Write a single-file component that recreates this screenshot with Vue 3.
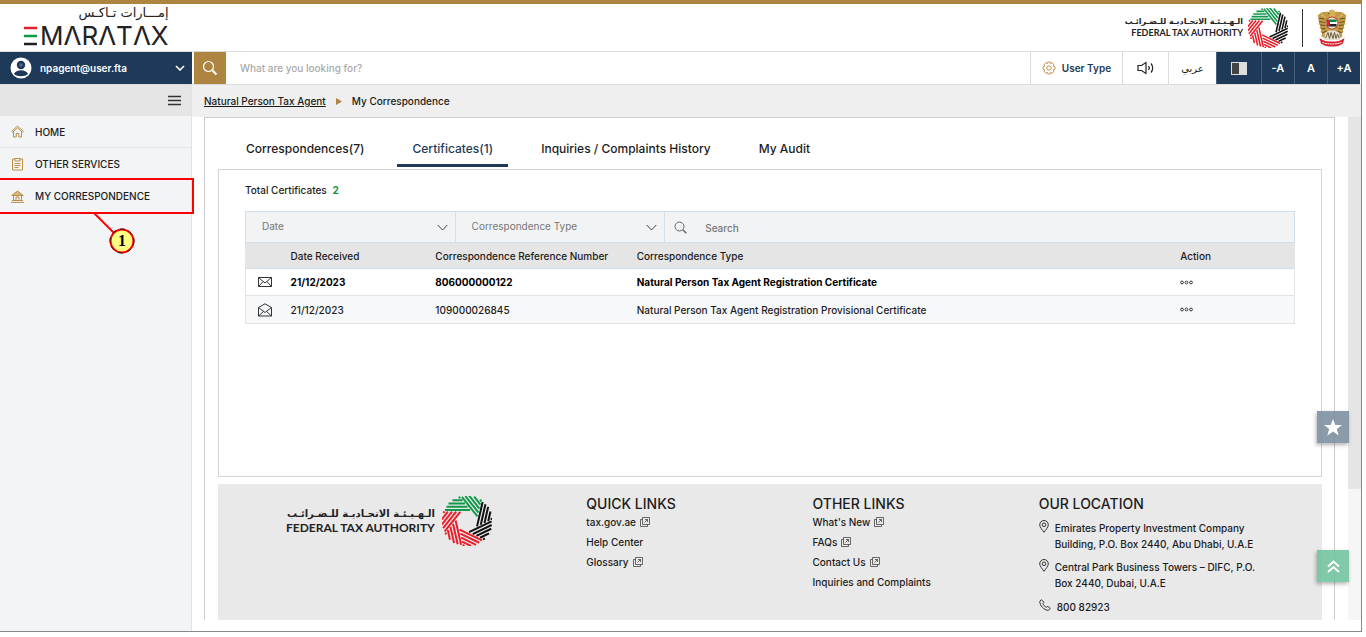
<template>
  <div class="page">
    <div class="frame">
      <header class="brand-bar">
        <a href="#" class="emaratax">
          <span class="emaratax-ar" lang="ar" dir="rtl">إمـــارات تـاكـس</span>
          <span class="emaratax-en">
            <svg width="14" height="20" viewBox="0 0 14 20">
              <path d="M0 2h13" stroke="#e0202b" stroke-width="2.500" />
              <path d="M0 10h13" stroke="#0f9a48" stroke-width="2.500" />
              <path d="M0 18h13" stroke="#222" stroke-width="2.500" />
            </svg>
            <span>MΛRΛTΛX</span>
          </span>
        </a>
        <div class="brand-right">
          <div class="fta">
            <div class="fta-text">
              <span class="fta-ar" lang="ar" dir="rtl">الـهـيـئـة الاتحـاديـة للـضـرائـب</span>
              <span class="fta-en">FEDERAL TAX AUTHORITY</span>
            </div>
            <svg class="knot" viewBox="-50 -50 100 100">
              <g v-for="(color, i) in knotColors" :key="i" :stroke="color" :transform="`rotate(${i * 51.43})`">
                <path :d="knotPath" />
              </g>
            </svg>
          </div>
          <span class="divider"></span>
          <svg class="emblem" viewBox="0 0 60 76">
            <path d="M24 6C16 4 5 6 1 14l3 3-2 4 3 4-2 5 4 3-2 5 4 3-2 5 4 3-2 5 5 4h32l5-4-2-5 4-3-2-5 4-3-2-5 4-3-2-5 3-4-2-4 3-3C55 6 44 4 36 6z" fill="#c39a47" />
            <path d="M21 9l4-6c4-4 12-2 12 5l-1 9H24l2-7z" fill="#d6b15a" />
            <path d="M21 9l4-2v3z" fill="#5a4017" />
            <path d="M3 18l12 2M4 25l11 2M6 32l10 1M8 40l9-1M10 48l9-4M57 18l-12 2M56 25l-11 2M54 32l-10 1M52 40l-9-1M50 48l-9-4" stroke="#6b4d1d" stroke-width="2" fill="none" />
            <path d="M8 11l9 6M52 11l-9 6" stroke="#e2c47c" stroke-width="2" />
            <path d="M16 48l8-5h12l8 5 2 14H14z" fill="#e6dfcf" />
            <path d="M17 58l5-11 3 12 3-12 4 12 3-12 3 12 3-9 3 8" stroke="#6d5b3c" stroke-width="2" fill="none" />
            <circle cx="30" cy="28" r="13" fill="#b7423a" />
            <circle cx="30" cy="28" r="11" fill="#f0e6cf" />
            <path d="M21 21h18v5H21z" fill="#108548" />
            <path d="M21 26h19v4H21z" fill="#fff" />
            <path d="M21 30h18v5H21z" fill="#222" />
            <path d="M20 22h6v12h-6z" fill="#d8222c" />
            <path d="M5 58c7 6 15 7 25 7s18-1 25-7l-3 11c-6 5-14 6-22 6s-16-1-22-6z" fill="#d8222c" />
            <path d="M11 67c9 4 29 4 38 0" stroke="#fff" stroke-width="2" stroke-dasharray="4 1" fill="none" />
          </svg>
        </div>
      </header>

      <div class="toolbar">
        <button class="user">
          <svg width="22" height="22" viewBox="0 0 22 22">
            <circle cx="11" cy="11" r="10.5" fill="#fff" />
            <circle cx="11" cy="8" r="4.2" fill="#1e3a58" />
            <path d="M4 17c2-5 12-5 14 0-3 3-11 3-14 0z" fill="#1e3a58" />
            <circle cx="11" cy="8" r="1.8" fill="#fff" opacity=".25" />
          </svg>
          <span>npagent@user.fta</span>
          <svg class="chev" width="10" height="6" viewBox="0 0 10 6"><path d="M1 1l4 4 4-4" stroke="#fff" stroke-width="1.6" fill="none" /></svg>
        </button>
        <button class="search-btn" aria-label="Search">
          <svg width="16" height="16" viewBox="0 0 16 16" fill="none" stroke="#fff">
            <circle cx="6.5" cy="6.5" r="5" stroke-width="1.2" />
            <path d="M10.5 10.5l4 4" stroke-width="2" />
          </svg>
        </button>
        <input v-model="query" class="query" type="text" placeholder="What are you looking for?" aria-label="What are you looking for?" />
        <button class="tool user-type">
          <svg width="14" height="14" viewBox="0 0 14 14" fill="none" stroke="#c09450">
            <path d="M5.8 1h2.4l.4 1.6 1.6-.8 1.9 1.9-.8 1.5 1.7.6v2.4l-1.7.6.8 1.5-1.9 1.9-1.6-.8-.4 1.6H5.8l-.4-1.6-1.6.8-1.9-1.9.8-1.5L1 8.2V5.8l1.7-.6-.8-1.5 1.9-1.9 1.6.8z" />
            <circle cx="7" cy="7" r="2.2" />
          </svg>
          User Type
        </button>
        <button class="tool sound" aria-label="Listen">
          <svg width="18" height="14" viewBox="0 0 18 14" fill="none" stroke="#222" stroke-width="1.2">
            <path d="M1 4.500h3.500L9 1.500v11L4.500 9.500H1z" />
            <path d="M11.500 5c.8 1 .8 3 0 4M14 2.500c2.200 2.500 2.200 6.500 0 9" />
          </svg>
        </button>
        <button class="tool arabic" lang="ar">عربي</button>
        <button class="dark contrast" aria-label="Contrast">
          <svg width="16" height="13" viewBox="0 0 16 13">
            <path d="M0 0h16v13H0z" fill="#ddd" />
            <path d="M1 1h7v11H1z" fill="#444" />
          </svg>
        </button>
        <button class="dark">-A</button>
        <button class="dark">A</button>
        <button class="dark">+A</button>
      </div>

      <div class="body">
        <aside class="sidebar">
          <div class="side-head">
            <button class="burger" aria-label="Menu">
              <svg width="13" height="11" viewBox="0 0 13 11"><path d="M0 1.500h13M0 5.500h13M0 9.500h13" stroke="#333" stroke-width="1.300" /></svg>
            </button>
          </div>
          <nav class="menu">
            <a href="#" class="item">
              <svg width="13" height="13" viewBox="0 0 13 13" fill="none" stroke="#b98f4a">
                <path d="M.7 6.300L6.500 1l5.800 5.300-.9 1-4.900-4.500-4.900 4.500z" />
                <path d="M2.500 7v5h2.700V8.500h2.600V12h2.700V7" />
              </svg>
              HOME
            </a>
            <a href="#" class="item">
              <svg width="13" height="14" viewBox="0 0 13 14" fill="none" stroke="#b98f4a">
                <path d="M4 2H1.500v11h10V2H9M4 1.500h5v2.500H4z" />
                <path d="M3.500 6.500h6M3.500 8.500h6M3.500 10.500h4" />
              </svg>
              OTHER SERVICES
            </a>
            <a href="#" class="item">
              <svg width="13" height="13" viewBox="0 0 13 13" fill="none" stroke="#b98f4a">
                <path d="M.7 5.500L6.500 1l5.800 4.500z" fill="#d7b67e" />
                <path d="M2.500 6v4.500M10.500 6v4.500M5 10.500V7h3v3.500" />
                <path d="M1 10.500h11M0 12.400h13" />
              </svg>
              MY CORRESPONDENCE
            </a>
          </nav>
          <div class="marker">
            <svg width="194" height="78" viewBox="0 0 194 78">
              <path d="M-2 1h195v34H-2" fill="none" stroke="#f00" stroke-width="2" />
              <path d="M94 35l20 20" stroke="#f00" stroke-width="2" />
              <circle cx="122" cy="63" r="11.500" fill="#ffff80" stroke="#f00" stroke-width="2" />
              <circle cx="122" cy="63" r="12" fill="none" stroke="#222" stroke-dasharray="5 4" />
              <text x="122" y="68" text-anchor="middle">1</text>
            </svg>
          </div>
        </aside>

        <main class="main">
          <div class="crumbs">
            <a href="#">Natural Person Tax Agent</a>
            <svg width="6" height="7" viewBox="0 0 6 7"><path d="M0 0l6 3.500L0 7z" fill="#b08542" /></svg>
            <span>My Correspondence</span>
          </div>
          <div class="scroll-area">
            <div class="panel">
              <div class="tabs" role="tablist">
                <button
                  v-for="t in tabs"
                  :key="t"
                  role="tab"
                  :class="{ active: t === activeTab }"
                  @click="activeTab = t"
                >{{ t }}</button>
              </div>

              <section class="card">
                <p class="total">Total Certificates <b>2</b></p>
                <div class="filters">
                  <div class="drop date">
                    <select v-model="date" aria-label="Date"><option value="">Date</option></select>
                    <svg width="11" height="7" viewBox="0 0 11 7"><path d="M.7 1l4.800 5 4.800-5" /></svg>
                  </div>
                  <div class="drop">
                    <select v-model="type" aria-label="Correspondence Type"><option value="">Correspondence Type</option></select>
                    <svg width="11" height="7" viewBox="0 0 11 7"><path d="M.7 1l4.800 5 4.800-5" /></svg>
                  </div>
                  <label class="find">
                    <svg width="13" height="13" viewBox="0 0 13 13" fill="none" stroke="#666">
                      <circle cx="5.500" cy="5.500" r="4.500" />
                      <path d="M8.800 8.800l3.500 3.500" stroke-width="1.500" />
                    </svg>
                    <input v-model="search" type="text" placeholder="Search" />
                  </label>
                </div>
                <table class="table">
                  <thead>
                    <tr>
                      <th class="c-icon"></th>
                      <th class="c-date">Date Received</th>
                      <th class="c-ref">Correspondence Reference Number</th>
                      <th>Correspondence Type</th>
                      <th class="c-action">Action</th>
                    </tr>
                  </thead>
                  <tbody>
                    <tr v-for="r in rows" :key="r.ref" :class="{ unread: r.unread }">
                      <td class="c-icon">
                        <svg v-if="r.unread" width="14" height="14" viewBox="0 0 14 14"><path d="M.5 2.500h13v9H.5zM.5 2.500L7 8l6.500-5.500M.5 11.500l4.700-5M13.500 11.500l-4.700-5" /></svg>
                        <svg v-else width="14" height="14" viewBox="0 0 14 14"><path d="M.5 4.500L7 .8l6.500 3.700v8.500H.5zM.5 4.500L7 9.500l6.500-5M.5 13l5-4.600M13.500 13l-5-4.600" /></svg>
                      </td>
                      <td>{{ r.date }}</td>
                      <td>{{ r.ref }}</td>
                      <td>{{ r.type }}</td>
                      <td>
                        <button class="more" aria-label="Actions">
                          <svg width="14" height="5" viewBox="0 0 14 5" fill="none" stroke="#222" stroke-width=".9"><circle cx="2" cy="2.500" r="1.400" /><circle cx="6.500" cy="2.500" r="1.400" /><circle cx="11" cy="2.500" r="1.400" /></svg>
                        </button>
                      </td>
                    </tr>
                  </tbody>
                </table>
              </section>

              <footer class="footer">
                <div class="fta big">
                  <div class="fta-text">
                    <span class="fta-ar" lang="ar" dir="rtl">الـهـيـئـة الاتحـاديـة للـضـرائـب</span>
                    <span class="fta-en">FEDERAL TAX AUTHORITY</span>
                  </div>
                  <svg class="knot" viewBox="-50 -50 100 100">
                    <g v-for="(color, i) in knotColors" :key="i" :stroke="color" :transform="`rotate(${i * 51.43})`">
                      <path :d="knotPath" />
                    </g>
                  </svg>
                </div>
                <div v-for="col in linkCols" :key="col.title" class="links">
                  <h3>{{ col.title }}</h3>
                  <a v-for="l in col.links" :key="l.text" href="#">
                    {{ l.text }}
                    <svg v-if="l.ext" width="10" height="10" viewBox="0 0 10 10" fill="none" stroke="#444" stroke-width=".8">
                      <path d="M2.500.5h7v7h-7zM2.500 2.500h-2v7h7v-2M4.500 5.500l3-3M5 2.500h2.500V5" />
                    </svg>
                  </a>
                </div>
                <div class="location">
                  <h3>OUR LOCATION</h3>
                  <p v-for="a in addresses" :key="a">
                    <svg width="10" height="13" viewBox="0 0 10 13" fill="none" stroke="#333">
                      <path d="M5 12.300C3 9.500.7 7 .7 4.800a4.300 4.300 0 018.600 0C9.300 7 7 9.500 5 12.300z" />
                      <circle cx="5" cy="4.800" r="1.800" />
                    </svg>
                    <span>{{ a }}</span>
                  </p>
                  <p class="phone">
                    <svg width="12" height="12" viewBox="0 0 12 12" fill="none" stroke="#333">
                      <path d="M2.500.7L.8 2.200C.6 6.500 5 11.300 9.300 11.300l2-1.800-2.500-2.200-1.500 1C5.600 7.500 4.500 6.200 3.900 4.600l1-1.300z" />
                    </svg>
                    <span>800 82923</span>
                  </p>
                </div>
              </footer>
            </div>
            <div class="track"><div class="thumb"></div></div>
          </div>
        </main>
      </div>
    </div>

    <button class="float star" aria-label="Favourites">
      <svg width="18" height="17" viewBox="0 0 18 17"><path d="M9 0l2.300 6H18l-5.300 4 2 6.500L9 12.600l-5.700 3.900 2-6.500L0 6h6.700z" fill="#fff" /></svg>
    </button>
    <button class="float up" aria-label="Back to top">
      <svg width="13" height="13" viewBox="0 0 13 13"><path d="M1 6.500l5.500-5 5.500 5M1 12l5.500-5 5.500 5" fill="none" stroke="#fff" stroke-width="2" /></svg>
    </button>
  </div>
</template>

<script setup>
import { ref } from 'vue'

const query = ref('')
const date = ref('')
const type = ref('')
const search = ref('')

const tabs = ['Correspondences(7)', 'Certificates(1)', 'Inquiries / Complaints History', 'My Audit']
const activeTab = ref('Certificates(1)')

const rows = [
  { date: '21/12/2023', ref: '806000000122', type: 'Natural Person Tax Agent Registration Certificate', unread: true },
  { date: '21/12/2023', ref: '109000026845', type: 'Natural Person Tax Agent Registration Provisional Certificate', unread: false }
]

const linkCols = [
  {
    title: 'QUICK LINKS',
    links: [
      { text: 'tax.gov.ae', ext: true },
      { text: 'Help Center' },
      { text: 'Glossary', ext: true }
    ]
  },
  {
    title: 'OTHER LINKS',
    links: [
      { text: "What's New", ext: true },
      { text: 'FAQs', ext: true },
      { text: 'Contact Us', ext: true },
      { text: 'Inquiries and Complaints' }
    ]
  }
]

const addresses = [
  'Emirates Property Investment Company Building, P.O. Box 2440, Abu Dhabi, U.A.E',
  'Central Park Business Towers – DIFC, P.O. Box 2440, Dubai, U.A.E'
]

// seven bundles of parallel strokes, one per turn
const knotColors = ['#11984a', '#11984a', '#111', '#111', '#e8202c', '#e8202c', '#e8202c']
const knotPath = 'M-44 -22H6M-41 -28.500H1M-37 -35H-4M-29 -41.500H-9M-17 -47H-13'
</script>

<style>
body {
  background: #fff;
}
</style>

<style scoped>
* { box-sizing: border-box; }
.page {
  min-height: 100vh;
  padding: 0 4px 5px 0;
  display: flex;
  flex-direction: column;
  font-family: Inter, "Noto Sans", sans-serif;
  font-size: 10px;
  font-weight: 500;
  color: #1c1c1c;
}
.frame {
  flex: 1;
  display: flex;
  flex-direction: column;
  border-right: 1px solid #888;
  border-bottom: 1px solid #888;
}
button {
  border: none;
  background: none;
  padding: 0;
  font: inherit;
  color: inherit;
  cursor: pointer;
}
input, select {
  border: none;
  background: none;
  outline: none;
  font: inherit;
  color: inherit;
}
a { color: inherit; text-decoration: none; }
svg { display: block; flex: none; }

.brand-bar {
  height: 52px;
  border-top: 4px solid #ad8440;
  border-bottom: 1px solid #ddd;
  padding: 0 14px 0 24px;
  display: flex;
  justify-content: space-between;
}
.emaratax { display: flex; flex-direction: column; color: #222; }
.emaratax-ar {
  font-family: "DejaVu Sans", sans-serif;
  font-size: 13px;
  line-height: 18px;
}
.emaratax-en {
  display: flex;
  align-items: center;
  gap: 2px;
  font-size: 26px;
  font-weight: 400;
  line-height: 28px;
}
.brand-right { display: flex; align-items: center; }
.fta { display: flex; align-items: center; gap: 5px; }
.fta-text { display: flex; flex-direction: column; align-items: flex-end; color: #222; font-weight: 700; }
.fta-ar { font-family: "DejaVu Sans", sans-serif; font-size: 8px; line-height: 11px; }
.fta-en { font-family: Lato, sans-serif; font-size: 9px; line-height: 12px; }
.knot { width: 40px; height: 40px; fill: none; stroke-width: 4; }
.divider { width: 1px; height: 38px; background: #333; margin: 0 14px; }
.emblem { width: 30px; height: 38px; }

.toolbar {
  display: flex;
  height: 33px;
  padding-right: 1px;
  border-bottom: 1px solid #ddd;
}
.user {
  width: 192px;
  background: #1e3a58;
  color: #fff;
  display: flex;
  align-items: center;
  gap: 8px;
  padding: 0 7px 0 10px;
  font-weight: 600;
}
.chev { margin-left: auto; }
.search-btn {
  width: 32px;
  margin-left: 2px;
  background: #ad8440;
  display: flex;
  align-items: center;
  justify-content: center;
}
.query { flex: 1; padding: 0 14px; }
.query::placeholder { color: #aaa; opacity: 1; }
.tool {
  border-left: 1px solid #ddd;
  display: flex;
  align-items: center;
  justify-content: center;
  gap: 6px;
}
.user-type { width: 92px; font-weight: 600; color: #1e3a58; }
.sound { width: 46px; }
.arabic { width: 48px; font-family: "DejaVu Sans", sans-serif; font-weight: 400; }
.dark {
  width: 33px;
  background: #1e3a58;
  color: #fff;
  font-size: 11px;
  font-weight: 600;
  border-left: 1px solid #45607b;
}
.contrast { width: 45px; display: flex; align-items: center; justify-content: center; }

.body { flex: 1; display: flex; }
.sidebar {
  position: relative;
  width: 192px;
  flex: none;
  background: #f2f4f6;
  border-right: 1px solid #dfe3e7;
}
.side-head {
  height: 31px;
  background: #e5e5e5;
  display: flex;
  justify-content: flex-end;
  align-items: center;
  padding-right: 10px;
}
.item {
  display: flex;
  align-items: center;
  gap: 11px;
  height: 32px;
  padding-left: 11px;
  border-bottom: 1px solid #e3e6e9;
}
.item:last-child { border-bottom: none; }
.marker { position: absolute; left: 0; top: 93px; pointer-events: none; }
.marker text { font-family: "Liberation Serif", serif; font-size: 16px; font-weight: 700; fill: #000; }

.main { flex: 1; min-width: 0; display: flex; flex-direction: column; }
.crumbs {
  height: 32px;
  background: #efefef;
  display: flex;
  align-items: center;
  gap: 10px;
  padding-left: 12px;
}
.crumbs a { text-decoration: underline; }
.scroll-area { flex: 1; display: flex; padding-bottom: 11px; }
.panel {
  flex: 1;
  min-width: 0;
  margin: 0 13px 0 12px;
  padding: 0 12px 0 13px;
  border: 1px solid #ccc;
  border-bottom: none;
  display: flex;
  flex-direction: column;
}
.track { width: 13px; background: #f6f6f6; }
.thumb { height: 74%; background: #e5e5e5; }
.tabs { display: flex; height: 51px; padding: 14px 0 2px 13px; }
.tabs button {
  padding: 0 15px;
  margin-right: 18px;
  font-size: 12px;
  border-bottom: 3px solid transparent;
}
.tabs .active { color: #1e3a58; border-color: #1e3a58; }

.card {
  flex: 1;
  border: 1px solid #d4d4d4;
  padding: 13px 26px;
}
.total { margin: 0 0 13px; line-height: 15px; }
.total b { color: #11984a; margin-left: 3px; }
.filters {
  display: flex;
  height: 32px;
  background: #f2f3f5;
  border: 1px solid #d3dfea;
}
.drop {
  width: 20%;
  border-right: 1px solid #d3dfea;
  display: flex;
  align-items: center;
  padding-right: 7px;
}
.drop select {
  flex: 1;
  min-width: 0;
  appearance: none;
  padding: 0 0 2px 16px;
  font-weight: 400;
  color: #777;
}
.drop svg { fill: none; stroke: #444; }
.find { flex: 1; display: flex; align-items: center; gap: 18px; padding-left: 9px; }
.find input { flex: 1; padding: 2px 0 0; }
.find input::placeholder { color: #777; opacity: 1; }
.table {
  width: 100%;
  table-layout: fixed;
  border-collapse: collapse;
  border: 1px solid #e2e4e7;
}
.table th, .table td { padding: 0; text-align: left; font-weight: 500; }
.table th { height: 25px; background: #e5e5e5; border-bottom: 1px solid #d3dfea; }
.table td { height: 28px; background: #f7f8fa; border-bottom: 1px solid #e2e4e7; }
.table .unread td { height: 27px; background: #fff; font-weight: 700; color: #000; }
.table .c-icon { width: 4.3%; padding-left: 12px; }
.table .c-icon svg { fill: none; stroke: #333; stroke-width: 1; }
.c-date { width: 13.8%; }
.c-ref { width: 19.2%; }
.c-action { width: 10.9%; }
.more { display: block; }

.footer {
  margin-top: 7px;
  background: #e9e9e9;
  display: grid;
  grid-template-columns: 300fr 226fr 226fr 283fr;
  padding: 12px 0 5px 68px;
}
.footer h3 { margin: 0; font-size: 14px; font-weight: 500; line-height: 16px; }
.footer .fta { align-self: start; }
.fta.big { gap: 7px; }
.big .fta-ar { font-size: 10px; line-height: 14px; }
.big .fta-en { font-size: 12px; line-height: 14px; }
.big .knot { width: 50px; height: 50px; }
.links { display: flex; flex-direction: column; }
.links a { display: flex; align-items: center; gap: 4px; line-height: 20px; }
.location p { display: flex; gap: 6px; margin: 0 60px 7px 0; line-height: 16px; }
.location h3 { margin-bottom: 8px; }
.location .phone { margin-bottom: 0; padding-top: 1px; }

.float {
  position: fixed;
  right: 17px;
  width: 32px;
  height: 32px;
  display: flex;
  align-items: center;
  justify-content: center;
  box-shadow: -1px 2px 4px rgba(0, 0, 0, .3);
}
.star { bottom: 194px; background: rgba(120, 137, 155, .85); }
.up { bottom: 55px; background: rgba(106, 193, 154, .85); }
</style>
